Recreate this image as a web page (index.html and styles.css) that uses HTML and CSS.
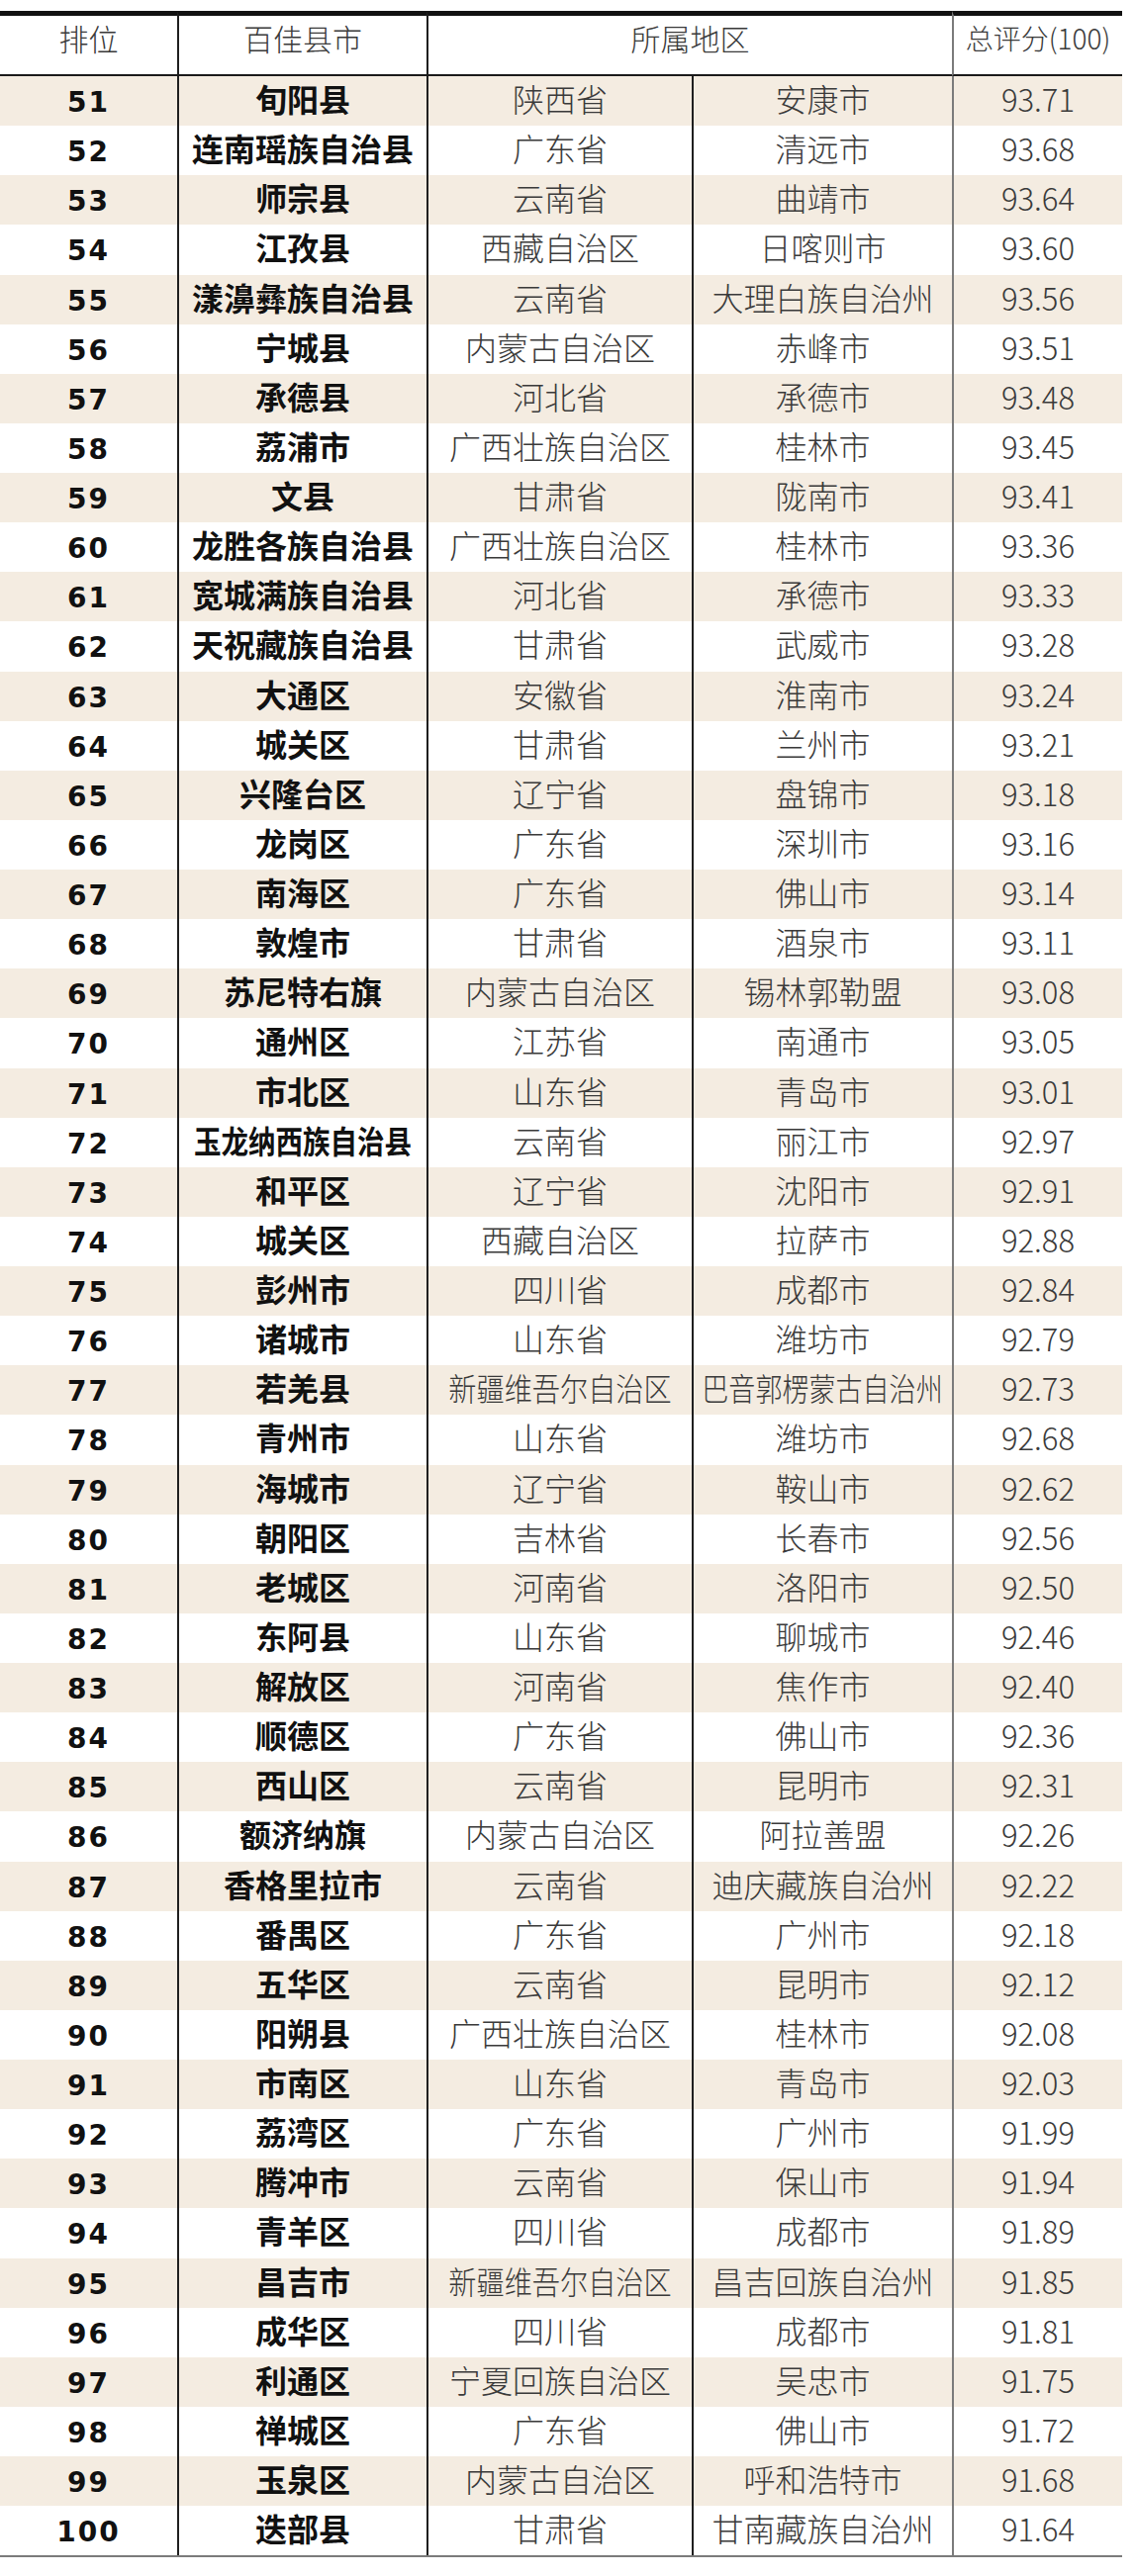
FILE: index.html
```html
<!DOCTYPE html>
<html lang="zh-CN">
<head>
<meta charset="utf-8">
<title>百佳县市 51-100</title>
<link rel="stylesheet" href="styles.css">
</head>
<body>
<table class="rank-table">
  <colgroup>
    <col class="w-rank">
    <col class="w-name">
    <col class="w-prov">
    <col class="w-city">
    <col class="w-score">
  </colgroup>
  <thead>
    <tr>
      <th class="h-rank">排位</th>
      <th class="h-name sep">百佳县市</th>
      <th class="h-region sep" colspan="2">所属地区</th>
      <th class="h-score sep-gray">总评分(100)</th>
    </tr>
  </thead>
  <tbody>
    <tr><td class="rank">51</td><td class="name sep">旬阳县</td><td class="prov sep">陕西省</td><td class="city sep">安康市</td><td class="score sep-gray">93.71</td></tr>
    <tr><td class="rank">52</td><td class="name sep">连南瑶族自治县</td><td class="prov sep">广东省</td><td class="city sep">清远市</td><td class="score sep-gray">93.68</td></tr>
    <tr><td class="rank">53</td><td class="name sep">师宗县</td><td class="prov sep">云南省</td><td class="city sep">曲靖市</td><td class="score sep-gray">93.64</td></tr>
    <tr><td class="rank">54</td><td class="name sep">江孜县</td><td class="prov sep">西藏自治区</td><td class="city sep">日喀则市</td><td class="score sep-gray">93.60</td></tr>
    <tr><td class="rank">55</td><td class="name sep">漾濞彝族自治县</td><td class="prov sep">云南省</td><td class="city sep">大理白族自治州</td><td class="score sep-gray">93.56</td></tr>
    <tr><td class="rank">56</td><td class="name sep">宁城县</td><td class="prov sep">内蒙古自治区</td><td class="city sep">赤峰市</td><td class="score sep-gray">93.51</td></tr>
    <tr><td class="rank">57</td><td class="name sep">承德县</td><td class="prov sep">河北省</td><td class="city sep">承德市</td><td class="score sep-gray">93.48</td></tr>
    <tr><td class="rank">58</td><td class="name sep">荔浦市</td><td class="prov sep">广西壮族自治区</td><td class="city sep">桂林市</td><td class="score sep-gray">93.45</td></tr>
    <tr><td class="rank">59</td><td class="name sep">文县</td><td class="prov sep">甘肃省</td><td class="city sep">陇南市</td><td class="score sep-gray">93.41</td></tr>
    <tr><td class="rank">60</td><td class="name sep">龙胜各族自治县</td><td class="prov sep">广西壮族自治区</td><td class="city sep">桂林市</td><td class="score sep-gray">93.36</td></tr>
    <tr><td class="rank">61</td><td class="name sep">宽城满族自治县</td><td class="prov sep">河北省</td><td class="city sep">承德市</td><td class="score sep-gray">93.33</td></tr>
    <tr><td class="rank">62</td><td class="name sep">天祝藏族自治县</td><td class="prov sep">甘肃省</td><td class="city sep">武威市</td><td class="score sep-gray">93.28</td></tr>
    <tr><td class="rank">63</td><td class="name sep">大通区</td><td class="prov sep">安徽省</td><td class="city sep">淮南市</td><td class="score sep-gray">93.24</td></tr>
    <tr><td class="rank">64</td><td class="name sep">城关区</td><td class="prov sep">甘肃省</td><td class="city sep">兰州市</td><td class="score sep-gray">93.21</td></tr>
    <tr><td class="rank">65</td><td class="name sep">兴隆台区</td><td class="prov sep">辽宁省</td><td class="city sep">盘锦市</td><td class="score sep-gray">93.18</td></tr>
    <tr><td class="rank">66</td><td class="name sep">龙岗区</td><td class="prov sep">广东省</td><td class="city sep">深圳市</td><td class="score sep-gray">93.16</td></tr>
    <tr><td class="rank">67</td><td class="name sep">南海区</td><td class="prov sep">广东省</td><td class="city sep">佛山市</td><td class="score sep-gray">93.14</td></tr>
    <tr><td class="rank">68</td><td class="name sep">敦煌市</td><td class="prov sep">甘肃省</td><td class="city sep">酒泉市</td><td class="score sep-gray">93.11</td></tr>
    <tr><td class="rank">69</td><td class="name sep">苏尼特右旗</td><td class="prov sep">内蒙古自治区</td><td class="city sep">锡林郭勒盟</td><td class="score sep-gray">93.08</td></tr>
    <tr><td class="rank">70</td><td class="name sep">通州区</td><td class="prov sep">江苏省</td><td class="city sep">南通市</td><td class="score sep-gray">93.05</td></tr>
    <tr><td class="rank">71</td><td class="name sep">市北区</td><td class="prov sep">山东省</td><td class="city sep">青岛市</td><td class="score sep-gray">93.01</td></tr>
    <tr><td class="rank">72</td><td class="name sep"><span class="fit fit-name8">玉龙纳西族自治县</span></td><td class="prov sep">云南省</td><td class="city sep">丽江市</td><td class="score sep-gray">92.97</td></tr>
    <tr><td class="rank">73</td><td class="name sep">和平区</td><td class="prov sep">辽宁省</td><td class="city sep">沈阳市</td><td class="score sep-gray">92.91</td></tr>
    <tr><td class="rank">74</td><td class="name sep">城关区</td><td class="prov sep">西藏自治区</td><td class="city sep">拉萨市</td><td class="score sep-gray">92.88</td></tr>
    <tr><td class="rank">75</td><td class="name sep">彭州市</td><td class="prov sep">四川省</td><td class="city sep">成都市</td><td class="score sep-gray">92.84</td></tr>
    <tr><td class="rank">76</td><td class="name sep">诸城市</td><td class="prov sep">山东省</td><td class="city sep">潍坊市</td><td class="score sep-gray">92.79</td></tr>
    <tr><td class="rank">77</td><td class="name sep">若羌县</td><td class="prov sep"><span class="fit fit-8">新疆维吾尔自治区</span></td><td class="city sep"><span class="fit fit-9">巴音郭楞蒙古自治州</span></td><td class="score sep-gray">92.73</td></tr>
    <tr><td class="rank">78</td><td class="name sep">青州市</td><td class="prov sep">山东省</td><td class="city sep">潍坊市</td><td class="score sep-gray">92.68</td></tr>
    <tr><td class="rank">79</td><td class="name sep">海城市</td><td class="prov sep">辽宁省</td><td class="city sep">鞍山市</td><td class="score sep-gray">92.62</td></tr>
    <tr><td class="rank">80</td><td class="name sep">朝阳区</td><td class="prov sep">吉林省</td><td class="city sep">长春市</td><td class="score sep-gray">92.56</td></tr>
    <tr><td class="rank">81</td><td class="name sep">老城区</td><td class="prov sep">河南省</td><td class="city sep">洛阳市</td><td class="score sep-gray">92.50</td></tr>
    <tr><td class="rank">82</td><td class="name sep">东阿县</td><td class="prov sep">山东省</td><td class="city sep">聊城市</td><td class="score sep-gray">92.46</td></tr>
    <tr><td class="rank">83</td><td class="name sep">解放区</td><td class="prov sep">河南省</td><td class="city sep">焦作市</td><td class="score sep-gray">92.40</td></tr>
    <tr><td class="rank">84</td><td class="name sep">顺德区</td><td class="prov sep">广东省</td><td class="city sep">佛山市</td><td class="score sep-gray">92.36</td></tr>
    <tr><td class="rank">85</td><td class="name sep">西山区</td><td class="prov sep">云南省</td><td class="city sep">昆明市</td><td class="score sep-gray">92.31</td></tr>
    <tr><td class="rank">86</td><td class="name sep">额济纳旗</td><td class="prov sep">内蒙古自治区</td><td class="city sep">阿拉善盟</td><td class="score sep-gray">92.26</td></tr>
    <tr><td class="rank">87</td><td class="name sep">香格里拉市</td><td class="prov sep">云南省</td><td class="city sep">迪庆藏族自治州</td><td class="score sep-gray">92.22</td></tr>
    <tr><td class="rank">88</td><td class="name sep">番禺区</td><td class="prov sep">广东省</td><td class="city sep">广州市</td><td class="score sep-gray">92.18</td></tr>
    <tr><td class="rank">89</td><td class="name sep">五华区</td><td class="prov sep">云南省</td><td class="city sep">昆明市</td><td class="score sep-gray">92.12</td></tr>
    <tr><td class="rank">90</td><td class="name sep">阳朔县</td><td class="prov sep">广西壮族自治区</td><td class="city sep">桂林市</td><td class="score sep-gray">92.08</td></tr>
    <tr><td class="rank">91</td><td class="name sep">市南区</td><td class="prov sep">山东省</td><td class="city sep">青岛市</td><td class="score sep-gray">92.03</td></tr>
    <tr><td class="rank">92</td><td class="name sep">荔湾区</td><td class="prov sep">广东省</td><td class="city sep">广州市</td><td class="score sep-gray">91.99</td></tr>
    <tr><td class="rank">93</td><td class="name sep">腾冲市</td><td class="prov sep">云南省</td><td class="city sep">保山市</td><td class="score sep-gray">91.94</td></tr>
    <tr><td class="rank">94</td><td class="name sep">青羊区</td><td class="prov sep">四川省</td><td class="city sep">成都市</td><td class="score sep-gray">91.89</td></tr>
    <tr><td class="rank">95</td><td class="name sep">昌吉市</td><td class="prov sep"><span class="fit fit-8">新疆维吾尔自治区</span></td><td class="city sep">昌吉回族自治州</td><td class="score sep-gray">91.85</td></tr>
    <tr><td class="rank">96</td><td class="name sep">成华区</td><td class="prov sep">四川省</td><td class="city sep">成都市</td><td class="score sep-gray">91.81</td></tr>
    <tr><td class="rank">97</td><td class="name sep">利通区</td><td class="prov sep">宁夏回族自治区</td><td class="city sep">吴忠市</td><td class="score sep-gray">91.75</td></tr>
    <tr><td class="rank">98</td><td class="name sep">禅城区</td><td class="prov sep">广东省</td><td class="city sep">佛山市</td><td class="score sep-gray">91.72</td></tr>
    <tr><td class="rank">99</td><td class="name sep">玉泉区</td><td class="prov sep">内蒙古自治区</td><td class="city sep">呼和浩特市</td><td class="score sep-gray">91.68</td></tr>
    <tr><td class="rank">100</td><td class="name sep">迭部县</td><td class="prov sep">甘肃省</td><td class="city sep">甘南藏族自治州</td><td class="score sep-gray">91.64</td></tr>
  </tbody>
</table>
</body>
</html>
```

FILE: styles.css
```css
html, body {
  margin: 0;
  padding: 0;
  background: #ffffff;
}

body {
  font-family: "Noto Sans CJK SC", "Noto Sans", sans-serif;
  color: #1e1e1e;
}

.rank-table {
  margin-top: 11px;
  width: 1134px;
  table-layout: fixed;
  border-collapse: separate;
  border-spacing: 0;
  border-bottom: 2px solid #7b7b7b;
}

.w-rank { width: 179px; }
.w-name { width: 252px; }
.w-prov { width: 268px; }
.w-city { width: 263px; }
.w-score { width: 172px; }

.rank-table th,
.rank-table td {
  box-sizing: border-box;
  padding: 0;
  text-align: center;
  white-space: nowrap;
  overflow: visible;
}

/* header */
.rank-table thead tr {
  height: 66px;
}

.rank-table th {
  vertical-align: top;
  padding-top: 4px;
  border-top: 5px solid #111111;
  border-bottom: 2px solid #1a1a1a;
  font-family: "Noto Sans CJK SC Light", "Noto Sans CJK SC DemiLight", "Noto Sans CJK SC", sans-serif;
  font-size: 30px;
  line-height: 36px;
  font-weight: 300;
  color: #3a3a3a;
}

.rank-table th.h-score {
  font-size: 28px;
}

/* vertical separators */
.sep {
  border-left: 2px solid #1f1f1f;
}

.sep-gray {
  border-left: 2px solid #7b7b7b;
}

/* body rows */
.rank-table tbody tr {
  height: 50.14px;
}

.rank-table tbody tr:nth-child(odd) {
  background: #f4ece1;
}

.rank-table td {
  vertical-align: top;
  padding-top: 2px;
  line-height: 40px;
}

.rank {
  font-family: "DejaVu Sans", "Liberation Sans", sans-serif;
  font-weight: 700;
  font-size: 28px;
  letter-spacing: 2px;
  color: #111111;
  padding-top: 7px !important;
}

.name {
  font-size: 32px;
  font-weight: 700;
  color: #111111;
}

.prov,
.city,
.score {
  font-family: "Noto Sans CJK SC Light", "Noto Sans CJK SC DemiLight", "Noto Sans CJK SC", sans-serif;
  font-weight: 300;
  color: #3a3a3a;
}

.prov,
.city {
  font-size: 32px;
}

.score {
  font-size: 31px;
  padding-top: 3px !important;
}

/* horizontally condensed labels that are too long for their column */
.fit {
  display: inline-block;
  white-space: nowrap;
}

.fit-name8 {
  transform: scaleX(0.86);
  margin: 0 -18px;
}

.fit-8 {
  transform: scaleX(0.88);
  margin: 0 -15px;
}

.fit-9 {
  transform: scaleX(0.845);
  margin: 0 -22px;
}
```
